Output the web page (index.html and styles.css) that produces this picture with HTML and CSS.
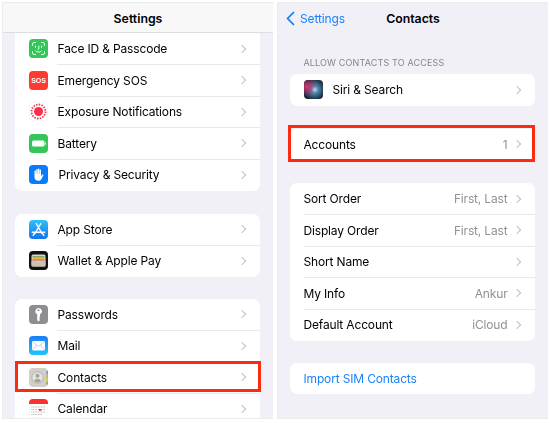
FILE: index.html
```html
<!DOCTYPE html>
<html lang="en">
<head>
<meta charset="utf-8">
<title>Settings - Contacts</title>
<link rel="stylesheet" href="styles.css">
</head>
<body>
<div class="screens">
  <section class="phone">
    <header class="navbar navbar-bar"><h1 class="title">Settings</h1></header>
    <div class="content">
      <div class="card card-top">
        <div class="row"><svg class="icon" viewBox="0 0 19 19"><rect width="19" height="19" rx="4" fill="#35c659"/><path d="M3.500 6.500V5A1.500 1.500 0 0 1 5 3.500h1.500M12.500 3.500H14A1.500 1.500 0 0 1 15.500 5v1.500M15.500 12.500V14A1.500 1.500 0 0 1 14 15.500h-1.500M6.500 15.500H5A1.500 1.500 0 0 1 3.500 14v-1.500M6.500 7v1.500M12.500 7v1.500M9.800 7v3.200H9M6.800 12.200c1.500 1.300 3.900 1.300 5.400 0" fill="none" stroke="#fff" stroke-width=".9" stroke-linecap="round"/></svg><span class="label">Face ID &amp; Passcode</span><span class="chev"></span></div>
        <div class="row"><svg class="icon" viewBox="0 0 19 19"><rect width="19" height="19" rx="4" fill="#fe3b30"/><text x="9.500" y="12.300" class="sos">SOS</text></svg><span class="label">Emergency SOS</span><span class="chev"></span></div>
        <div class="row"><svg class="icon" viewBox="0 0 19 19"><rect x=".3" y=".3" width="18.400" height="18.400" rx="4" fill="#fff" stroke="#eee" stroke-width=".6"/><circle cx="9.500" cy="9.500" r="4.500" fill="#fb2d4c"/><circle cx="9.500" cy="9.500" r="7" fill="none" stroke="#fb2d4c" stroke-width="1.800" stroke-dasharray="1.500 1.250"/></svg><span class="label">Exposure Notifications</span><span class="chev"></span></div>
        <div class="row"><svg class="icon" viewBox="0 0 19 19"><rect width="19" height="19" rx="4" fill="#35c659"/><rect x="3" y="6.500" width="12.500" height="6" rx="1.500" fill="#fff"/><rect x="16" y="8.300" width="1" height="2.400" rx=".5" fill="#d8f5df"/></svg><span class="label">Battery</span><span class="chev"></span></div>
        <div class="row"><svg class="icon" viewBox="0 0 19 19"><rect width="19" height="19" rx="4" fill="#0a7bfb"/><path d="M6 11V6.200a.7.700 0 0 1 1.400 0V9h.3V4.700a.7.700 0 0 1 1.400 0V9h.3V4.300a.7.700 0 0 1 1.400 0V9h.3V5.300a.7.700 0 0 1 1.400 0V11.500l1-1.600c.6-.8 1.700-.2 1.300.6l-1.700 3.300c-.7 1.400-1.700 2-3.200 2-2.400 0-3.800-1.400-3.900-3.500z" fill="#fff" transform="translate(-.5 0)"/></svg><span class="label label-privacy">Privacy &amp; Security</span><span class="chev"></span></div>
      </div>
      <div class="card">
        <div class="row"><svg class="icon" viewBox="0 0 19 19"><defs><linearGradient id="appstore" x1="0" y1="0" x2="0" y2="1"><stop offset="0" stop-color="#2dc1fb"/><stop offset="1" stop-color="#1574ef"/></linearGradient></defs><rect width="19" height="19" rx="4" fill="url(#appstore)"/><path d="M11.700 3.600 6 13.500M7.300 3.600 13 13.500M3.300 12.300h12.400M4.200 15.300l1-1.600M14.800 15.300l-1-1.600" fill="none" stroke="#fff" stroke-width="1.400" stroke-linecap="round"/></svg><span class="label">App Store</span><span class="chev"></span></div>
        <div class="row"><svg class="icon" viewBox="0 0 19 19"><rect width="19" height="19" rx="4" fill="#111"/><rect x="2.500" y="3.500" width="14" height="12" rx="1.500" fill="#d9d6c8"/><rect x="3.500" y="5" width="12" height="1.700" fill="#7fa86a"/><rect x="3.500" y="6.700" width="12" height="1.500" fill="#e9b949"/><rect x="3.500" y="8.200" width="12" height="1.500" fill="#e0705c"/><path d="M2.500 10h5l2 1.500 2-1.500h5v4a1.500 1.500 0 0 1-1.500 1.500H4A1.500 1.500 0 0 1 2.500 14z" fill="#c9c5b4"/></svg><span class="label">Wallet &amp; Apple Pay</span><span class="chev"></span></div>
      </div>
      <div class="card card-bottom">
        <div class="row"><svg class="icon" viewBox="0 0 19 19"><rect width="19" height="19" rx="4" fill="#8e8e90"/><path d="M9.500 3a3.300 3.300 0 0 0-1.300 6.300v6l1.300 1.200 1.500-1.400-.8-.9.8-.9-.8-.8.8-.9V9.300A3.300 3.300 0 0 0 9.500 3z" fill="#fff"/><circle cx="9.500" cy="5.300" r="1" fill="#8e8e90"/></svg><span class="label">Passwords</span><span class="chev"></span></div>
        <div class="row"><svg class="icon" viewBox="0 0 19 19"><defs><linearGradient id="mail" x1="0" y1="0" x2="0" y2="1"><stop offset="0" stop-color="#1d7cf6"/><stop offset="1" stop-color="#22c3fb"/></linearGradient></defs><rect width="19" height="19" rx="4" fill="url(#mail)"/><rect x="3" y="5" width="13" height="9.500" rx="1.200" fill="#fff"/><path d="m3.300 5.500 6.200 5 6.200-5M3.300 14l4.300-5M15.700 14l-4.300-5" fill="none" stroke="#7ab8ee" stroke-width=".6"/></svg><span class="label">Mail</span><span class="chev"></span></div>
        <div class="row row-contacts"><svg class="icon" viewBox="0 0 19 19"><rect width="19" height="19" rx="4" fill="#d1d0c8"/><rect x="17.300" y="3" width="1.700" height="3.500" fill="#5aa4e8"/><rect x="17.300" y="6.500" width="1.700" height="3.500" fill="#f2a33c"/><rect x="17.300" y="10" width="1.700" height="3.500" fill="#e9c23c"/><rect x="17.300" y="13.500" width="1.700" height="3" fill="#7dbb55"/><circle cx="8.500" cy="9.500" r="5.700" fill="#e4e3dd" stroke="#a4a39d" stroke-width=".7"/><circle cx="8.500" cy="7.800" r="2" fill="#a4a39d"/><path d="M5 13a3.800 3.800 0 0 1 7 0 5 5 0 0 1-7 0z" fill="#a4a39d"/></svg><span class="label">Contacts</span><span class="chev"></span><span class="mark mark-contacts"></span></div>
        <div class="row"><svg class="icon" viewBox="0 0 19 19"><rect x=".3" y=".3" width="18.400" height="18.400" rx="4" fill="#fff" stroke="#eee" stroke-width=".6"/><path d="M0 5V4a4 4 0 0 1 4-4h11a4 4 0 0 1 4 4v1z" fill="#fb3030"/><path d="M2.500 8h14M2.500 10.500h14M2.500 13h14M2.500 15.500h11" stroke="#9a9a9a" stroke-width=".8" stroke-dasharray=".9 .7"/><rect x="10" y="10" width="2.400" height="1.800" fill="#f33"/></svg><span class="label">Calendar</span><span class="chev"></span></div>
      </div>
    </div>
  </section>
  <section class="phone">
    <header class="navbar navbar-plain">
      <a class="back"><svg class="back-icon" viewBox="0 0 9 15"><path d="M7.500 1.500 1.500 7.500l6 6" fill="none" stroke="#0a7bfb" stroke-width="1.700" stroke-linecap="round" stroke-linejoin="round"/></svg>Settings</a>
      <h1 class="title">Contacts</h1>
    </header>
    <div class="content content-right">
      <div class="caption">ALLOW CONTACTS TO ACCESS</div>
      <div class="card card-siri">
        <div class="row"><svg class="icon" viewBox="0 0 19 19"><defs><radialGradient id="siri" cx=".55" cy=".5" r=".6"><stop offset="0" stop-color="#e8f2ff"/><stop offset=".3" stop-color="#4f8fb5"/><stop offset=".7" stop-color="#2b4a62"/><stop offset="1" stop-color="#14202c"/></radialGradient><radialGradient id="siri2" cx=".15" cy=".35" r=".55"><stop offset="0" stop-color="#e0336f"/><stop offset="1" stop-color="#a02a60" stop-opacity="0"/></radialGradient></defs><rect width="19" height="19" rx="4" fill="url(#siri)"/><rect width="19" height="19" rx="4" fill="url(#siri2)"/></svg><span class="label">Siri &amp; Search</span><span class="chev"></span></div>
      </div>
      <div class="card card-accounts">
        <div class="row"><span class="label">Accounts</span><span class="value">1</span><span class="chev"></span><span class="mark mark-accounts"></span></div>
      </div>
      <div class="card card-order">
        <div class="row"><span class="label">Sort Order</span><span class="value">First, Last</span><span class="chev"></span></div>
        <div class="row"><span class="label">Display Order</span><span class="value">First, Last</span><span class="chev"></span></div>
        <div class="row"><span class="label">Short Name</span><span class="chev"></span></div>
        <div class="row"><span class="label">My Info</span><span class="value">Ankur</span><span class="chev"></span></div>
        <div class="row"><span class="label">Default Account</span><span class="value">iCloud</span><span class="chev"></span></div>
      </div>
      <div class="card card-import">
        <div class="row"><span class="label label-link">Import SIM Contacts</span></div>
      </div>
    </div>
  </section>
</div>
</body>
</html>
```

FILE: styles.css
```css
* { box-sizing: border-box; }
html, body { margin: 0; padding: 0; background: #fff; }
body { width: 550px; height: 423px; overflow: hidden; font-family: Inter, "Liberation Sans", sans-serif; color: #000; }
.screens { display: flex; gap: 4px; padding: 2px; height: 421px; filter: blur(.25px); }
.phone { width: 271px; display: flex; flex-direction: column; background: #f0f0f6; border: 1px solid #ececee; border-right: 0; overflow: hidden; }
.navbar { position: relative; flex: none; height: 30px; display: flex; align-items: center; justify-content: center; }
.navbar-bar { padding-top: 1px; background: #f8f8f9; border-bottom: 1px solid #dedee0; }
.navbar-plain { background: #f0f0f6; }
.title { margin: 0; font-size: 12.300px; font-weight: 600; color: #000; }
.back { position: absolute; left: 8px; top: 0; height: 100%; display: flex; align-items: center; gap: 5px; color: #1a82fb; font-size: 12px; letter-spacing: -.12px; }
.back-icon { width: 9px; height: 15px; }
.content { flex: 1; min-height: 0; padding: 0 13px 0 12px; display: flex; flex-direction: column; gap: 23px; }
.content-right { gap: 0; }
.card { flex: none; background: #fff; border-radius: 7px; }
.card-top { border-radius: 0 0 7px 7px; }
.card-bottom { margin-top: -1px; }
.row { position: relative; height: 31.500px; display: flex; align-items: center; padding: 0 13.500px; font-size: 12px; letter-spacing: -.16px; }
.row + .row::before { content: ""; position: absolute; left: 42px; right: 0; top: -.5px; height: 1px; background: #e9e9eb; }
.card-order .row + .row::before { left: 13.500px; }
.icon { flex: none; width: 19px; height: 19px; margin-right: 10px; }
.sos { font-family: "Liberation Sans", sans-serif; font-size: 7px; font-weight: 700; fill: #fff; text-anchor: middle; }
.label { flex: 1; white-space: nowrap; }
.label-privacy { padding-left: 1px; }
.label-link { color: #1a82fb; }
.value { color: #929296; margin-right: 6px; white-space: nowrap; }
.chev { flex: none; width: 6px; height: 6px; margin-right: 2px; border-top: 1.200px solid #c2c2c6; border-right: 1.200px solid #c2c2c6; transform: rotate(45deg); }
.mark { position: absolute; border: 3px solid #fb2a10; }
.mark-contacts { left: 0; right: -.5px; top: -1px; bottom: 1px; }
.mark-accounts { left: -2px; right: 0; top: -4px; bottom: -1.500px; }
.caption { margin: 24px 0 0 13.500px; height: 17px; font-size: 9px; letter-spacing: .15px; color: #85858a; }
.card-accounts { margin-top: 23px; }
.card-order { margin-top: 23px; }
.card-import { margin-top: 22px; }
```
